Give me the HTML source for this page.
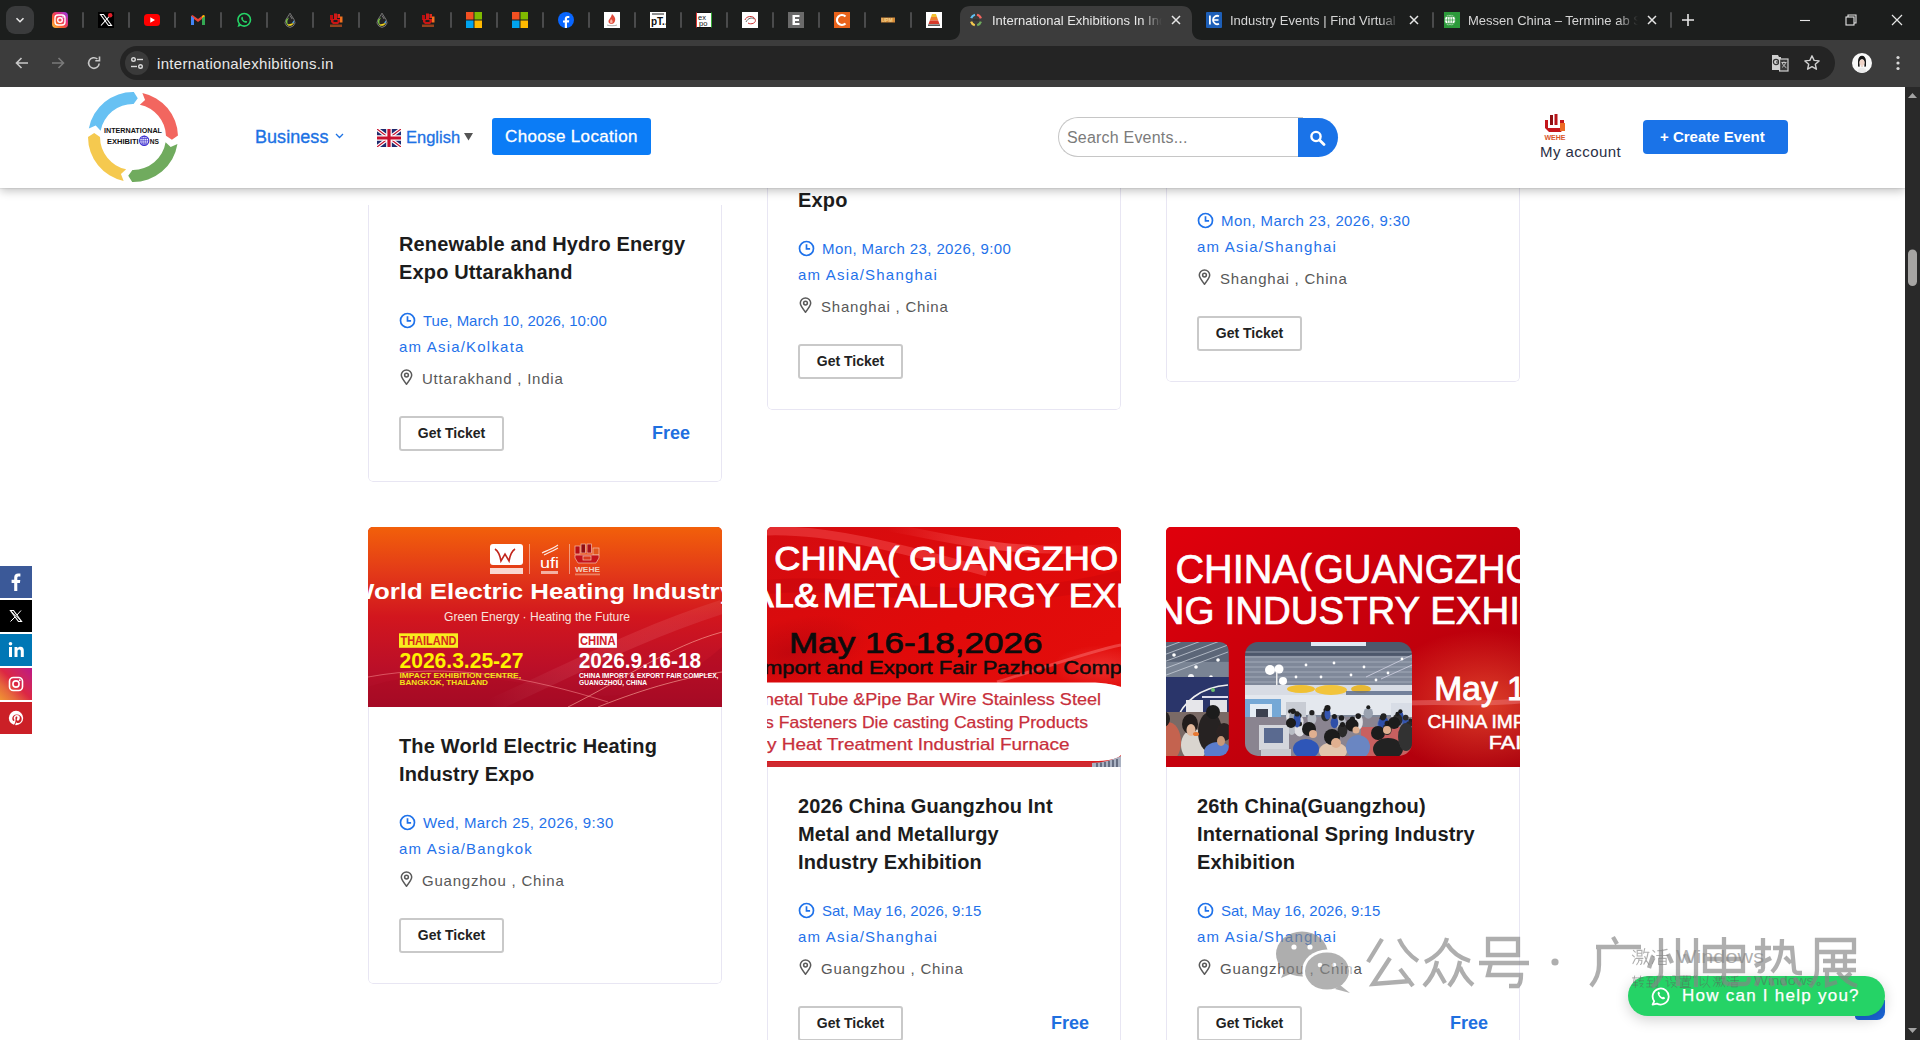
<!DOCTYPE html>
<html><head><meta charset="utf-8">
<style>
*{box-sizing:border-box;margin:0;padding:0}
html,body{width:1920px;height:1040px;overflow:hidden;background:#fff;font-family:"Liberation Sans",sans-serif}
.abs{position:absolute}
/* ---------- browser chrome ---------- */
#tabstrip{position:absolute;left:0;top:0;width:1920px;height:40px;background:#1c1e1d}
#toolbar{position:absolute;left:0;top:40px;width:1920px;height:47px;background:#3c3c3c}
.fav{position:absolute;top:12px;width:16px;height:16px}
.sep{position:absolute;top:12px;width:2px;height:16px;background:#4a4b4c;border-radius:1px}
#omni{position:absolute;left:120px;top:6px;width:1715px;height:34px;border-radius:17px;background:#242424}
/* ---------- page ---------- */
#page{position:absolute;left:0;top:87px;width:1905px;height:953px;background:#fff;overflow:hidden}
#scrollbar{position:absolute;left:1905px;top:87px;width:15px;height:953px;background:#292929;z-index:20}
#header{position:absolute;left:0;top:0;width:1905px;height:101px;background:#fff;z-index:10;box-shadow:0 1px 1px rgba(0,0,0,.06),0 3px 9px rgba(0,0,0,.24)}
.card{position:absolute;width:354px;border-radius:5px;background:#fff;overflow:hidden}
.cbody{padding:25px 31px 30px 30px;border:1px solid #e8e6f3;border-top:none;border-radius:0 0 5px 5px}
.ttl{font-weight:bold;font-size:20px;line-height:28px;color:#1c1c1c;letter-spacing:.15px}
.date{margin-top:22px;font-size:15px;line-height:26px;color:#1f72ea;position:relative}
.loc{margin-top:6px;font-size:15px;line-height:26px;color:#585858;position:relative;letter-spacing:.78px}
.row{margin-top:24px;height:35px;position:relative}
.btn{position:absolute;left:0;top:0;width:105px;height:35px;border:2px solid #c9c9c9;border-radius:3px;font-weight:bold;font-size:14px;line-height:31px;text-align:center;color:#222}
.free{position:absolute;right:0;top:0;font-weight:bold;font-size:18px;line-height:35px;color:#1f6fdf}
.img{position:relative;overflow:hidden;background:#d71920}
.ci{position:absolute;left:0;top:4px}
.pi{position:absolute;left:1px;top:3px}

</style></head>
<body>
<!-- TAB STRIP -->
<div id="tabstrip">
<div class="abs" style="left:6px;top:6px;width:28px;height:28px;border-radius:9px;background:#3a3b3c"></div>
<svg class="abs" style="left:14px;top:14px" width="12" height="12" viewBox="0 0 12 12"><path d="M2.5 4.2L6 7.7 9.5 4.2" stroke="#e6e6e6" stroke-width="1.6" fill="none"/></svg>
<svg class="fav" style="left:52px" viewBox="0 0 16 16"><defs><linearGradient id="ig" x1="0" y1="1" x2="1" y2="0"><stop offset="0" stop-color="#fdcb3c"/><stop offset=".35" stop-color="#f55a2f"/><stop offset=".65" stop-color="#e3307d"/><stop offset="1" stop-color="#8a3cf0"/></linearGradient></defs><rect width="16" height="16" rx="4" fill="url(#ig)"/><rect x="3" y="3" width="10" height="10" rx="3" fill="none" stroke="#fff" stroke-width="1.4"/><circle cx="8" cy="8" r="2.3" fill="none" stroke="#fff" stroke-width="1.4"/><circle cx="11" cy="5" r=".8" fill="#fff"/></svg>
<svg class="fav" style="left:98px" viewBox="0 0 16 16"><rect width="16" height="16" fill="#000"/><path d="M2.5 2.5h3l8 11h-3z" fill="none" stroke="#fff" stroke-width="1.1"/><path d="M13 2.5L3 13.5" stroke="#fff" stroke-width="1.1"/><circle cx="12.2" cy="3.2" r="2.2" fill="#e0202a"/></svg>
<svg class="fav" style="left:144px" viewBox="0 0 16 16"><rect y="2" width="16" height="12" rx="3.5" fill="#f00"/><path d="M6.3 5.2v5.6L11 8z" fill="#fff"/></svg>
<svg class="fav" style="left:190px" viewBox="0 0 16 16"><path d="M1 4v9h3V7l4 3 4-3v6h3V4l-1.5-1L8 7 2.5 3z" fill="#ea4335"/><path d="M1 4v9h3V6z" fill="#4285f4"/><path d="M15 4v9h-3V6z" fill="#34a853"/><path d="M12 6l3-2-1.5-1L12 4z" fill="#fbbc04"/></svg>
<svg class="fav" style="left:236px" viewBox="0 0 16 16"><circle cx="8.2" cy="7.8" r="6.3" fill="none" stroke="#25d366" stroke-width="1.6"/><path d="M1.5 15l1.2-3.6 2.4 2.4z" fill="#25d366"/><path d="M5.6 5.2c.4-.5.9-.4 1.1 0l.5 1.1-.5.7c.5 1 1.3 1.8 2.3 2.3l.7-.5 1.1.5c.4.2.5.7 0 1.1-1 .9-2.6.3-4-1.1S4.7 6.2 5.6 5.2z" fill="#25d366"/></svg>
<svg class="fav" style="left:282px" viewBox="0 0 16 16"><path d="M8 1.2L4 7.5A4.9 4.9 0 1 0 12 7.5z" fill="#232323" stroke="#9a9a9a" stroke-width=".7"/><path d="M4.2 7.6A4.9 4.9 0 0 0 8 14.3c-2-1-3-3-2.6-5.5L7 5.5z" fill="#79c043"/><path d="M5 12.5c1.5 1.5 4 2 6-.2.5-.6.8-1.2.9-1.9-1.5 1.2-4 1.5-6.9 2.1z" fill="#f0d21e"/><path d="M11.8 8.5c.5 1 .3 2.2-.2 3l-1.5-.8z" fill="#4ea2e6"/><path d="M8 3.5l2.2 3.5" stroke="#bbb" stroke-width=".6"/></svg>
<svg class="fav" style="left:328px" viewBox="0 0 16 16"><rect x="2" y="3" width="3" height="5" fill="#b80e10"/><rect x="6" y="1.5" width="3" height="6" fill="#d01818"/><rect x="9.5" y="2" width="2.5" height="4" fill="#e02a1a"/><path d="M3 7h9v3l-2 2H5L3 10z" fill="#cc1414"/><rect x="12" y="4.5" width="2.5" height="6" fill="#f0701e"/><rect x="5.5" y="8" width="4" height="2" fill="#1c1e1d"/><rect x="2" y="12.5" width="12" height="2.5" fill="#c8501e" opacity=".7"/></svg>
<svg class="fav" style="left:374px" viewBox="0 0 16 16"><path d="M8 1.2L4 7.5A4.9 4.9 0 1 0 12 7.5z" fill="#232323" stroke="#9a9a9a" stroke-width=".7"/><path d="M4.2 7.6A4.9 4.9 0 0 0 8 14.3c-2-1-3-3-2.6-5.5L7 5.5z" fill="#79c043"/><path d="M5 12.5c1.5 1.5 4 2 6-.2.5-.6.8-1.2.9-1.9-1.5 1.2-4 1.5-6.9 2.1z" fill="#f0d21e"/><path d="M11.8 8.5c.5 1 .3 2.2-.2 3l-1.5-.8z" fill="#4ea2e6"/><path d="M8 3.5l2.2 3.5" stroke="#bbb" stroke-width=".6"/></svg>
<svg class="fav" style="left:420px" viewBox="0 0 16 16"><rect x="2" y="3" width="3" height="5" fill="#b80e10"/><rect x="6" y="1.5" width="3" height="6" fill="#d01818"/><rect x="9.5" y="2" width="2.5" height="4" fill="#e02a1a"/><path d="M3 7h9v3l-2 2H5L3 10z" fill="#cc1414"/><rect x="12" y="4.5" width="2.5" height="6" fill="#f0701e"/><rect x="5.5" y="8" width="4" height="2" fill="#1c1e1d"/><rect x="2" y="12.5" width="12" height="2.5" fill="#c8501e" opacity=".7"/></svg>
<svg class="fav" style="left:466px" viewBox="0 0 16 16"><rect x="0" y="0" width="7.5" height="7.5" fill="#f25022"/><rect x="8.5" y="0" width="7.5" height="7.5" fill="#7fba00"/><rect x="0" y="8.5" width="7.5" height="7.5" fill="#00a4ef"/><rect x="8.5" y="8.5" width="7.5" height="7.5" fill="#ffb900"/></svg>
<svg class="fav" style="left:512px" viewBox="0 0 16 16"><rect x="0" y="0" width="7.5" height="7.5" fill="#f25022"/><rect x="8.5" y="0" width="7.5" height="7.5" fill="#7fba00"/><rect x="0" y="8.5" width="7.5" height="7.5" fill="#00a4ef"/><rect x="8.5" y="8.5" width="7.5" height="7.5" fill="#ffb900"/></svg>
<svg class="fav" style="left:558px" viewBox="0 0 16 16"><circle cx="8" cy="8" r="8" fill="#0866ff"/><path d="M9 16v-5.5h1.9l.3-2.2H9V7c0-.6.2-1.1 1.1-1.1h1.2V4c-.2 0-.9-.1-1.7-.1-1.7 0-2.8 1-2.8 2.9v1.6H5v2.2h1.8V16z" fill="#fff"/></svg>
<svg class="fav" style="left:604px" viewBox="0 0 16 16"><rect width="16" height="16" fill="#fff"/><path d="M8 2c2 2 4 4 3 7-.5 2-2 3-3.5 3S4 11 4.5 9C5 7 7 6 8 2z" fill="#e04a3a"/><path d="M7 7c1 1 2 2 1.5 3.5S6 11 6 10s.5-2 1-3z" fill="#f7b6a8"/><path d="M3 13c2 1 8 1 10 0" stroke="#999" stroke-width=".8" fill="none"/></svg>
<svg class="fav" style="left:650px" viewBox="0 0 16 16"><rect width="16" height="16" fill="#fff"/><text x="1" y="13" font-family="Liberation Sans" font-weight="bold" font-size="10" fill="#111">pT..</text><path d="M2 2h12" stroke="#222" stroke-width="1"/></svg>
<svg class="fav" style="left:696px" viewBox="0 0 16 16"><rect width="16" height="16" fill="#fff"/><rect x=".5" y=".5" width="15" height="15" fill="none" stroke="#111" stroke-width="1"/><path d="M.5 15.5v-15" stroke="#d33" stroke-width="1"/><path d="M15.5 .5v15" stroke="#3a3" stroke-width="1"/><text x="2" y="7.5" font-family="Liberation Sans" font-size="7.5" fill="#111">ex</text><text x="3" y="14" font-family="Liberation Sans" font-size="7.5" fill="#111">po</text></svg>
<svg class="fav" style="left:742px" viewBox="0 0 16 16"><rect width="16" height="16" fill="#fff"/><path d="M3 8c1-4 8-5 10-1s-4 6-7 4" stroke="#c33" stroke-width="1" fill="none"/><path d="M4 10c2-4 6-5 8-3" stroke="#444" stroke-width=".8" fill="none"/></svg>
<svg class="fav" style="left:788px" viewBox="0 0 16 16"><rect width="16" height="16" fill="#6a6a6a"/><path d="M4.5 3h7v2h-4.5v2h4v2h-4v2h4.5v2h-7z" fill="#fff"/></svg>
<svg class="fav" style="left:834px" viewBox="0 0 16 16"><rect width="16" height="16" fill="#e8621a"/><path d="M11.5 4.5A5 5 0 1 0 11.5 11.5" stroke="#fff" stroke-width="2.2" fill="none"/></svg>
<svg class="fav" style="left:880px" viewBox="0 0 16 16"><rect x="1" y="5.5" width="14" height="5" fill="#d38a3a"/><text x="1.5" y="10" font-family="Liberation Sans" font-weight="bold" font-size="5" fill="#f4d28c">UPM</text></svg>
<svg class="fav" style="left:926px" viewBox="0 0 16 16"><rect width="16" height="16" fill="#fff"/><path d="M6 2h4l1 3H5z" fill="#f2c230"/><path d="M5 5h6l1.2 3.5H3.8z" fill="#f08030"/><path d="M3.8 8.5h8.4l1.3 3.5H2.5z" fill="#d63a2a"/><rect x="2" y="12.5" width="12" height="1.3" fill="#333"/></svg>
<div class="sep" style="left:82px"></div><div class="sep" style="left:128px"></div><div class="sep" style="left:174px"></div><div class="sep" style="left:220px"></div><div class="sep" style="left:266px"></div><div class="sep" style="left:312px"></div><div class="sep" style="left:358px"></div><div class="sep" style="left:404px"></div><div class="sep" style="left:450px"></div><div class="sep" style="left:496px"></div><div class="sep" style="left:542px"></div><div class="sep" style="left:588px"></div><div class="sep" style="left:634px"></div><div class="sep" style="left:680px"></div><div class="sep" style="left:726px"></div><div class="sep" style="left:772px"></div><div class="sep" style="left:818px"></div><div class="sep" style="left:864px"></div><div class="sep" style="left:910px"></div>
<!-- active tab -->
<svg class="abs" style="left:950px;top:6px" width="252" height="34" viewBox="0 0 252 34"><path d="M0 34c6 0 10-4 10-10V10C10 4 14 0 20 0h212c6 0 10 4 10 10v14c0 6 4 10 10 10z" fill="#3c3c3c"/></svg>
<svg class="fav" style="left:968px" viewBox="0 0 16 16"><g fill="none" stroke-width="2.2"><path d="M3.2 6.2A5.3 5.3 0 0 1 7 2.8" stroke="#5fc0f3"/><path d="M9 2.8a5.3 5.3 0 0 1 3.9 3.6" stroke="#f2665f"/><path d="M12.9 9.6A5.3 5.3 0 0 1 9.2 13.2" stroke="#70ab5e"/><path d="M6.8 13.2A5.3 5.3 0 0 1 3.1 9.6" stroke="#f5c94f"/></g><rect x="5" y="7" width="6" height="2" fill="#333"/></svg>
<div class="abs" style="left:992px;top:13px;width:170px;height:18px;overflow:hidden;white-space:nowrap;font-size:13px;line-height:16px;color:#e8e8e8;-webkit-mask-image:linear-gradient(90deg,#000 150px,transparent 170px)">International Exhibitions In India 2025</div>
<svg class="abs" style="left:1171px;top:15px" width="10" height="10" viewBox="0 0 10 10"><path d="M1 1l8 8M9 1L1 9" stroke="#e6e6e6" stroke-width="1.5"/></svg>
<!-- tab 2 -->
<svg class="fav" style="left:1206px" viewBox="0 0 16 16"><rect width="16" height="16" rx="1" fill="#1d5fb8"/><rect x="3" y="3.5" width="1.8" height="9" fill="#fff"/><path d="M13 4.2A4.2 4.2 0 1 0 13 11.8" stroke="#fff" stroke-width="1.8" fill="none"/><rect x="7.5" y="7.2" width="5" height="1.6" fill="#fff"/></svg>
<div class="abs" style="left:1230px;top:13px;width:170px;height:18px;overflow:hidden;white-space:nowrap;font-size:13px;line-height:16px;color:#d5d5d5;-webkit-mask-image:linear-gradient(90deg,#000 150px,transparent 170px)">Industry Events | Find Virtual Events</div>
<svg class="abs" style="left:1409px;top:15px" width="10" height="10" viewBox="0 0 10 10"><path d="M1 1l8 8M9 1L1 9" stroke="#e6e6e6" stroke-width="1.5"/></svg>
<div class="sep" style="left:1432px"></div>
<!-- tab 3 -->
<svg class="fav" style="left:1444px" viewBox="0 0 16 16"><rect width="16" height="16" fill="#2c9a3a"/><circle cx="6" cy="8" r="5.5" fill="#fff"/><circle cx="6" cy="8" r="5.5" fill="none" stroke="#2c9a3a" stroke-width=".8"/><path d="M6 2.5v11M.5 8h11M2 4.5h8M2 11.5h8" stroke="#2c9a3a" stroke-width=".7"/><ellipse cx="6" cy="8" rx="2.5" ry="5.5" fill="none" stroke="#2c9a3a" stroke-width=".7"/></svg>
<div class="abs" style="left:1468px;top:13px;width:170px;height:18px;overflow:hidden;white-space:nowrap;font-size:13px;line-height:16px;color:#d5d5d5;-webkit-mask-image:linear-gradient(90deg,#000 150px,transparent 170px)">Messen China &ndash; Termine ab September</div>
<svg class="abs" style="left:1647px;top:15px" width="10" height="10" viewBox="0 0 10 10"><path d="M1 1l8 8M9 1L1 9" stroke="#e6e6e6" stroke-width="1.5"/></svg>
<div class="sep" style="left:1670px"></div>
<svg class="abs" style="left:1681px;top:13px" width="14" height="14" viewBox="0 0 14 14"><path d="M7 1v12M1 7h12" stroke="#e6e6e6" stroke-width="1.6"/></svg>
<!-- window controls -->
<svg class="abs" style="left:1799px;top:14px" width="12" height="12" viewBox="0 0 12 12"><path d="M1 6.5h10" stroke="#e6e6e6" stroke-width="1.1"/></svg>
<svg class="abs" style="left:1845px;top:14px" width="12" height="12" viewBox="0 0 12 12"><rect x="1" y="3" width="8" height="8" fill="none" stroke="#e6e6e6" stroke-width="1.1"/><path d="M3 3V1h8v8H9" fill="none" stroke="#e6e6e6" stroke-width="1.1"/></svg>
<svg class="abs" style="left:1891px;top:14px" width="12" height="12" viewBox="0 0 12 12"><path d="M1 1l10 10M11 1L1 11" stroke="#e6e6e6" stroke-width="1.2"/></svg>
</div>
<div id="toolbar">
<svg class="abs" style="left:14px;top:15px" width="16" height="16" viewBox="0 0 16 16"><path d="M14 8H2.5M7.5 3L2.5 8l5 5" stroke="#c8c8c8" stroke-width="1.6" fill="none"/></svg>
<svg class="abs" style="left:50px;top:15px" width="16" height="16" viewBox="0 0 16 16"><path d="M2 8h11.5M8.5 3l5 5-5 5" stroke="#7a7a7a" stroke-width="1.6" fill="none"/></svg>
<svg class="abs" style="left:86px;top:15px" width="16" height="16" viewBox="0 0 16 16"><path d="M13.2 8.5A5.3 5.3 0 1 1 11.4 4" stroke="#c8c8c8" stroke-width="1.6" fill="none"/><path d="M13.5 1.5v4.2H9.3" stroke="#c8c8c8" stroke-width="1.6" fill="none"/></svg>
<div id="omni"></div>
<div class="abs" style="left:125px;top:11px;width:24px;height:24px;border-radius:12px;background:#3a3a3a"></div>
<svg class="abs" style="left:129px;top:15px" width="16" height="16" viewBox="0 0 16 16"><g stroke="#d8d8d8" stroke-width="1.4" fill="none"><circle cx="4.5" cy="4.5" r="1.8"/><path d="M8 4.5h6"/><circle cx="11.5" cy="11.5" r="1.8"/><path d="M2 11.5h6"/></g></svg>
<div class="abs" style="left:157px;top:14px;font-size:15px;line-height:20px;color:#e8e8e8;letter-spacing:.3px">internationalexhibitions.in</div>
<svg class="abs" style="left:1771px;top:14px" width="18" height="18" viewBox="0 0 18 18"><path d="M1 1h6l1 2h2v13H1z" fill="#cfcfcf"/><circle cx="5" cy="8" r="2.6" fill="none" stroke="#333" stroke-width="1.2"/><path d="M5 8h2.5" stroke="#333" stroke-width="1.1"/><rect x="8.6" y="5" width="8.4" height="12" fill="#3a3a3a" stroke="#cfcfcf" stroke-width="1.2"/><path d="M10.5 8.5h5M13 7.5v1M11.2 8.5c.6 2.2 2 4 4.2 5.2M14.6 8.5c-.5 2-1.6 3.6-3.4 4.8" stroke="#cfcfcf" stroke-width=".9" fill="none"/></svg>
<svg class="abs" style="left:1803px;top:14px" width="18" height="18" viewBox="0 0 18 18"><path d="M9 1.8l2.1 4.6 5 .5-3.8 3.4 1.1 4.9L9 12.7l-4.4 2.5 1.1-4.9L1.9 6.9l5-.5z" fill="none" stroke="#d0d0d0" stroke-width="1.4" stroke-linejoin="round"/></svg>
<div class="abs" style="left:1852px;top:13px;width:20px;height:20px;border-radius:50%;background:#f8f8f8;overflow:hidden"><svg width="20" height="20" viewBox="0 0 20 20"><path d="M6 13.5V8.3C6 4.8 7.8 2.8 10 2.8s4 2 4 5.5v5.2l-1.6.3V9.2c0-1.8-1-3-2.4-3s-2.4 1.2-2.4 3v4.6z" fill="#161616"/><ellipse cx="10" cy="9.6" rx="2.5" ry="3.1" fill="#f0d4c8"/><path d="M9.3 12.5v1.5h1.4v-1.5z" fill="#e8c8b8"/><path d="M4.5 21c.6-3.8 2.8-6.5 5.5-6.5s4.9 2.7 5.5 6.5z" fill="#eaeaea"/></svg></div>
<svg class="abs" style="left:1892px;top:14px" width="12" height="18" viewBox="0 0 12 18"><circle cx="6" cy="3.5" r="1.6" fill="#d8d8d8"/><circle cx="6" cy="9" r="1.6" fill="#d8d8d8"/><circle cx="6" cy="14.5" r="1.6" fill="#d8d8d8"/></svg>
</div>
<div id="page">
  <div class="card" style="left:368px;top:-62px"><div class="img" style="height:180px;background:#fff"></div><div class="cbody">
    <div class="ttl">Renewable and Hydro Energy<br>Expo Uttarakhand</div>
    <div class="date"><svg class="ci" width="17" height="17" viewBox="0 0 17 17"><circle cx="8.5" cy="8.5" r="7" fill="none" stroke="#1f72ea" stroke-width="1.7"/><path d="M8.5 4.3v4.6h3.6" fill="none" stroke="#1f72ea" stroke-width="1.7"/></svg><span style="margin-left:24px;letter-spacing:0.0px">Tue, March 10, 2026, 10:00</span><br><span style="letter-spacing:1.2px">am Asia/Kolkata</span></div>
    <div class="loc"><svg class="pi" width="13" height="17" viewBox="0 0 13 17"><path d="M6.5 15.2C3.6 11.6 1.3 8.8 1.3 6.1a5.2 5.2 0 0 1 10.4 0c0 2.7-2.3 5.5-5.2 9.1z" fill="none" stroke="#5a5a5a" stroke-width="1.5" stroke-linejoin="round"/><circle cx="6.5" cy="6.1" r="1.9" fill="none" stroke="#5a5a5a" stroke-width="1.5"/></svg><span style="margin-left:23px">Uttarakhand , India</span></div>
    <div class="row"><div class="btn">Get Ticket</div><div class="free">Free</div></div>
  </div></div>
  <div class="card" style="left:767px;top:-134px"><div class="img" style="height:180px"></div><div class="cbody">
    <div class="ttl">Shanghai International<br>Expo</div>
    <div class="date"><svg class="ci" width="17" height="17" viewBox="0 0 17 17"><circle cx="8.5" cy="8.5" r="7" fill="none" stroke="#1f72ea" stroke-width="1.7"/><path d="M8.5 4.3v4.6h3.6" fill="none" stroke="#1f72ea" stroke-width="1.7"/></svg><span style="margin-left:24px;letter-spacing:0.4px">Mon, March 23, 2026, 9:00</span><br><span style="letter-spacing:1.2px">am Asia/Shanghai</span></div>
    <div class="loc"><svg class="pi" width="13" height="17" viewBox="0 0 13 17"><path d="M6.5 15.2C3.6 11.6 1.3 8.8 1.3 6.1a5.2 5.2 0 0 1 10.4 0c0 2.7-2.3 5.5-5.2 9.1z" fill="none" stroke="#5a5a5a" stroke-width="1.5" stroke-linejoin="round"/><circle cx="6.5" cy="6.1" r="1.9" fill="none" stroke="#5a5a5a" stroke-width="1.5"/></svg><span style="margin-left:23px">Shanghai , China</span></div>
    <div class="row"><div class="btn">Get Ticket</div></div>
  </div></div>
  <div class="card" style="left:1166px;top:-162px"><div class="img" style="height:180px"></div><div class="cbody">
    <div class="ttl">Shanghai International<br>Heating Expo</div>
    <div class="date"><svg class="ci" width="17" height="17" viewBox="0 0 17 17"><circle cx="8.5" cy="8.5" r="7" fill="none" stroke="#1f72ea" stroke-width="1.7"/><path d="M8.5 4.3v4.6h3.6" fill="none" stroke="#1f72ea" stroke-width="1.7"/></svg><span style="margin-left:24px;letter-spacing:0.4px">Mon, March 23, 2026, 9:30</span><br><span style="letter-spacing:1.2px">am Asia/Shanghai</span></div>
    <div class="loc"><svg class="pi" width="13" height="17" viewBox="0 0 13 17"><path d="M6.5 15.2C3.6 11.6 1.3 8.8 1.3 6.1a5.2 5.2 0 0 1 10.4 0c0 2.7-2.3 5.5-5.2 9.1z" fill="none" stroke="#5a5a5a" stroke-width="1.5" stroke-linejoin="round"/><circle cx="6.5" cy="6.1" r="1.9" fill="none" stroke="#5a5a5a" stroke-width="1.5"/></svg><span style="margin-left:23px">Shanghai , China</span></div>
    <div class="row"><div class="btn">Get Ticket</div></div>
  </div></div>
  <div class="card" style="left:368px;top:440px"><div class="img" style="height:180px"><svg width="354" height="180" viewBox="0 0 354 180" style="display:block">
<defs>
<linearGradient id="b1g" x1="0" y1="0" x2="0" y2="1"><stop offset="0" stop-color="#f2600a"/><stop offset=".25" stop-color="#e33a18"/><stop offset=".5" stop-color="#d2161e"/><stop offset=".78" stop-color="#bb0f28"/><stop offset="1" stop-color="#a30c28"/></linearGradient>
<linearGradient id="b1w" x1="0" y1="0" x2="1" y2="0"><stop offset="0" stop-color="#fff" stop-opacity="0"/><stop offset=".6" stop-color="#ff8a8a" stop-opacity=".35"/><stop offset="1" stop-color="#fff" stop-opacity=".15"/></linearGradient>
</defs>
<rect width="354" height="180" fill="url(#b1g)"/>
<path d="M0 160C60 140 130 150 200 165S320 150 354 120V180H0z" fill="#a80a20" opacity=".35"/>
<path d="M120 180C190 150 260 110 354 80" stroke="url(#b1w)" stroke-width="14" fill="none" opacity=".45"/>
<path d="M0 150C80 135 160 150 240 175" stroke="#ff9a9a" stroke-width="1" fill="none" opacity=".5"/>
<path d="M200 180C260 150 300 120 354 105" stroke="#ffb0a0" stroke-width="1" fill="none" opacity=".6"/>
<path d="M230 180C280 160 320 150 354 145" stroke="#ffb0a0" stroke-width="1" fill="none" opacity=".6"/>
<!-- logos -->
<rect x="122" y="17" width="33" height="21" rx="3" fill="#fff"/>
<path d="M127 22c3 2 5 6 6 12l4-7 4 7c1-6 3-10 6-12" stroke="#c2261c" stroke-width="1.6" fill="none"/>
<rect x="122" y="41" width="33" height="6" fill="#fff" opacity=".8"/>
<rect x="161" y="17" width="1" height="30" fill="#fff" opacity=".45"/>
<path d="M174 26c4-2 10-4 16-8M176 28c4-2 9-4 14-7" stroke="#fff" stroke-width="1.1" fill="none" opacity=".9"/>
<text x="172" y="41" font-family="Liberation Sans" font-size="14" fill="#fff" textLength="19" lengthAdjust="spacingAndGlyphs">ufi</text>
<rect x="173" y="44" width="17" height="3" fill="#fff" opacity=".6"/>
<rect x="201" y="17" width="1" height="30" fill="#fff" opacity=".45"/>
<g stroke="#f3c0b0" stroke-width=".7"><rect x="207" y="19" width="5" height="8" fill="#b80e14"/><rect x="213" y="17" width="4.5" height="9" fill="#8e0c10"/><rect x="219" y="17" width="4.5" height="9" fill="#a8101a"/><rect x="225" y="21" width="6" height="7" fill="#e0581e"/><path d="M207 28h24v3l-3 5h-18l-3-5z" fill="#c4141c"/><rect x="215" y="29" width="8" height="4" fill="#d9391c"/></g>
<text x="207" y="45" font-family="Liberation Sans" font-weight="bold" font-size="8" fill="#f1d0c0" textLength="25" lengthAdjust="spacingAndGlyphs">WEHE</text>
<rect x="207" y="46.5" width="25" height="1.8" fill="#f1a080" opacity=".7"/>
<!-- title -->
<text x="-18" y="72" font-family="Liberation Sans" font-weight="bold" font-size="21.5" fill="#fff" textLength="384" lengthAdjust="spacingAndGlyphs">World Electric Heating Industry</text>
<text x="76" y="93.6" font-family="Liberation Sans" font-size="12" fill="#f7e4dc" textLength="186" lengthAdjust="spacingAndGlyphs">Green Energy · Heating the Future</text>
<rect x="31" y="106.3" width="59" height="14.5" fill="#f9ec1e"/>
<text x="32.5" y="118.4" font-family="Liberation Sans" font-weight="bold" font-size="12" fill="#d22a1e" textLength="56" lengthAdjust="spacingAndGlyphs">THAILAND</text>
<text x="31.5" y="141.4" font-family="Liberation Sans" font-weight="bold" font-size="22.5" fill="#fff200" textLength="124" lengthAdjust="spacingAndGlyphs">2026.3.25-27</text>
<text x="31.5" y="151" font-family="Liberation Sans" font-weight="bold" font-size="7.6" fill="#f2e21a" textLength="121.5" lengthAdjust="spacingAndGlyphs">IMPACT EXHIBITION CENTRE,</text>
<text x="31.5" y="158.3" font-family="Liberation Sans" font-weight="bold" font-size="7.6" fill="#f2e21a" textLength="88.5" lengthAdjust="spacingAndGlyphs">BANGKOK, THAILAND</text>
<rect x="210.7" y="106.3" width="38.2" height="14.5" fill="#fff"/>
<text x="212" y="118.4" font-family="Liberation Sans" font-weight="bold" font-size="12" fill="#d0202a" textLength="35.5" lengthAdjust="spacingAndGlyphs">CHINA</text>
<text x="210.7" y="141.4" font-family="Liberation Sans" font-weight="bold" font-size="22.5" fill="#fff" textLength="122.3" lengthAdjust="spacingAndGlyphs">2026.9.16-18</text>
<text x="211" y="151" font-family="Liberation Sans" font-weight="bold" font-size="7.6" fill="#fff" textLength="139.5" lengthAdjust="spacingAndGlyphs">CHINA IMPORT &amp; EXPORT FAIR COMPLEX,</text>
<text x="211" y="158.3" font-family="Liberation Sans" font-weight="bold" font-size="7.6" fill="#fff" textLength="68" lengthAdjust="spacingAndGlyphs">GUANGZHOU, CHINA</text>
</svg></div><div class="cbody">
    <div class="ttl">The World Electric Heating<br>Industry Expo</div>
    <div class="date"><svg class="ci" width="17" height="17" viewBox="0 0 17 17"><circle cx="8.5" cy="8.5" r="7" fill="none" stroke="#1f72ea" stroke-width="1.7"/><path d="M8.5 4.3v4.6h3.6" fill="none" stroke="#1f72ea" stroke-width="1.7"/></svg><span style="margin-left:24px;letter-spacing:0.4px">Wed, March 25, 2026, 9:30</span><br><span style="letter-spacing:1.2px">am Asia/Bangkok</span></div>
    <div class="loc"><svg class="pi" width="13" height="17" viewBox="0 0 13 17"><path d="M6.5 15.2C3.6 11.6 1.3 8.8 1.3 6.1a5.2 5.2 0 0 1 10.4 0c0 2.7-2.3 5.5-5.2 9.1z" fill="none" stroke="#5a5a5a" stroke-width="1.5" stroke-linejoin="round"/><circle cx="6.5" cy="6.1" r="1.9" fill="none" stroke="#5a5a5a" stroke-width="1.5"/></svg><span style="margin-left:23px">Guangzhou , China</span></div>
    <div class="row"><div class="btn">Get Ticket</div></div>
  </div></div>
  <div class="card" style="left:767px;top:440px"><div class="img" style="height:240px"><svg width="354" height="240" viewBox="0 0 354 240" style="display:block">
<defs>
<linearGradient id="b2g" x1="0" y1="0" x2="1" y2="1"><stop offset="0" stop-color="#d40c10"/><stop offset=".45" stop-color="#e00a0a"/><stop offset="1" stop-color="#e4100c"/></linearGradient>
<radialGradient id="b2d"><stop offset="0" stop-color="#9a0010" stop-opacity=".4"/><stop offset="1" stop-color="#9a0010" stop-opacity="0"/></radialGradient><radialGradient id="b2l"><stop offset="0" stop-color="#ff7070" stop-opacity=".35"/><stop offset="1" stop-color="#ff7070" stop-opacity="0"/></radialGradient><linearGradient id="b2s" x1="0" y1="0" x2="1" y2="0"><stop offset="0" stop-color="#ff6a6a" stop-opacity="0"/><stop offset=".5" stop-color="#ff7070" stop-opacity=".5"/><stop offset="1" stop-color="#ff5050" stop-opacity="0"/></linearGradient>
</defs>
<rect width="354" height="240" fill="url(#b2g)"/>
<path d="M0 4C60 2 130 20 220 45" stroke="#ff6a6a" stroke-width="9" fill="none" opacity=".35"/>
<path d="M120 0C180 10 240 30 354 20" stroke="url(#b2s)" stroke-width="8" fill="none"/>
<ellipse cx="25" cy="125" rx="80" ry="34" transform="rotate(-12 25 125)" fill="url(#b2d)"/>
<path d="M0 60C100 50 200 90 354 50" stroke="#b00008" stroke-width="14" fill="none" opacity=".2"/>
<ellipse cx="335" cy="140" rx="50" ry="22" fill="url(#b2l)"/>
<path d="M230 155C280 140 320 125 354 118" stroke="#ff8a8a" stroke-width="3" fill="none" opacity=".4"/>
<text x="7.3" y="42.6" font-family="Liberation Sans" font-size="33" fill="#fff" stroke="#fff" stroke-width=".9" textLength="343.8" lengthAdjust="spacingAndGlyphs">CHINA( GUANGZHO</text>
<text x="-17.4" y="79.6" font-family="Liberation Sans" font-size="33" fill="#fff" stroke="#fff" stroke-width=".9" textLength="68.6" lengthAdjust="spacingAndGlyphs">AL&amp;</text><text x="55.8" y="79.6" font-family="Liberation Sans" font-size="33" fill="#fff" stroke="#fff" stroke-width=".9" textLength="352" lengthAdjust="spacingAndGlyphs">METALLURGY EXHIB</text>
<text x="21.9" y="125.8" font-family="Liberation Sans" font-size="29.5" fill="#0c0c0c" stroke="#0c0c0c" stroke-width=".7" textLength="253.6" lengthAdjust="spacingAndGlyphs">May 16-18,2026</text>
<text x="-3" y="146.9" font-family="Liberation Sans" font-size="18" fill="#0c0c0c" stroke="#0c0c0c" stroke-width=".45" textLength="358" lengthAdjust="spacingAndGlyphs">mport and Export Fair Pazhou Comp</text>
<path d="M0 155.6H325C342 155.6 354 160 354 160V228C350 232 342 234 325 234H0z" fill="#fff"/>
<path d="M0 234.5H354V240H0z" fill="#cf2a30"/>
<path d="M325 240V236C335 236 345 233 354 229V240z" fill="#aab2c2"/><path d="M330 240v-4M334 240v-4.5M338 240v-5M342 240v-6M346 240v-7M350 240v-8" stroke="#3a4258" stroke-width="1.2"/>
<text x="-3" y="178" font-family="Liberation Sans" font-size="16.5" fill="#c82f3b" stroke="#c82f3b" stroke-width=".25" textLength="337" lengthAdjust="spacingAndGlyphs">netal  Tube &amp;Pipe  Bar Wire Stainless Steel</text>
<text x="-2" y="200.5" font-family="Liberation Sans" font-size="16.5" fill="#c82f3b" stroke="#c82f3b" stroke-width=".25" textLength="323" lengthAdjust="spacingAndGlyphs">s Fasteners Die casting Casting Products</text>
<text x="0" y="222.5" font-family="Liberation Sans" font-size="16.5" fill="#c82f3b" stroke="#c82f3b" stroke-width=".25" textLength="302.5" lengthAdjust="spacingAndGlyphs">y Heat  Treatment  Industrial Furnace</text>
</svg></div><div class="cbody">
    <div class="ttl">2026 China Guangzhou Int<br>Metal and Metallurgy<br>Industry Exhibition</div>
    <div class="date"><svg class="ci" width="17" height="17" viewBox="0 0 17 17"><circle cx="8.5" cy="8.5" r="7" fill="none" stroke="#1f72ea" stroke-width="1.7"/><path d="M8.5 4.3v4.6h3.6" fill="none" stroke="#1f72ea" stroke-width="1.7"/></svg><span style="margin-left:24px;letter-spacing:0.0px">Sat, May 16, 2026, 9:15</span><br><span style="letter-spacing:1.2px">am Asia/Shanghai</span></div>
    <div class="loc"><svg class="pi" width="13" height="17" viewBox="0 0 13 17"><path d="M6.5 15.2C3.6 11.6 1.3 8.8 1.3 6.1a5.2 5.2 0 0 1 10.4 0c0 2.7-2.3 5.5-5.2 9.1z" fill="none" stroke="#5a5a5a" stroke-width="1.5" stroke-linejoin="round"/><circle cx="6.5" cy="6.1" r="1.9" fill="none" stroke="#5a5a5a" stroke-width="1.5"/></svg><span style="margin-left:23px">Guangzhou , China</span></div>
    <div class="row"><div class="btn">Get Ticket</div><div class="free">Free</div></div>
  </div></div>
  <div class="card" style="left:1166px;top:440px"><div class="img" style="height:240px"><svg width="354" height="240" viewBox="0 0 354 240" style="display:block">
<defs>
<linearGradient id="b3g" x1="0" y1="0" x2="1" y2="1"><stop offset="0" stop-color="#e0000c"/><stop offset=".5" stop-color="#c6000c"/><stop offset="1" stop-color="#a9000d"/></linearGradient>
<radialGradient id="b3r" cx=".9" cy=".73" r=".3"><stop offset="0" stop-color="#ff7040" stop-opacity=".55"/><stop offset="1" stop-color="#ff7040" stop-opacity="0"/></radialGradient>
<linearGradient id="ceil" x1="0" y1="0" x2="0" y2="1"><stop offset="0" stop-color="#5d6780"/><stop offset=".6" stop-color="#8a93a6"/><stop offset="1" stop-color="#c9ced8"/></linearGradient>
<clipPath id="cp1"><rect x="-20" y="114.9" width="82.8" height="114" rx="9"/></clipPath>
<filter id="blr" x="-5%" y="-5%" width="110%" height="110%"><feGaussianBlur stdDeviation=".5"/></filter><clipPath id="cp2"><rect x="79" y="114.9" width="167" height="114" rx="13"/></clipPath>
</defs>
<rect width="354" height="240" fill="url(#b3g)"/>
<rect width="354" height="240" fill="url(#b3r)"/>
<path d="M240 176C280 174 320 178 354 174" stroke="#f08080" stroke-width="5" fill="none" opacity=".45"/>
<text x="9.5" y="55.6" font-family="Liberation Sans" font-size="40" fill="#fff" stroke="#fff" stroke-width=".7" textLength="136.5" lengthAdjust="spacingAndGlyphs">CHINA(</text><text x="148" y="55.6" font-family="Liberation Sans" font-size="40" fill="#fff" stroke="#fff" stroke-width=".7" textLength="249" lengthAdjust="spacingAndGlyphs">GUANGZHOU</text>
<text x="-9.5" y="96.9" font-family="Liberation Sans" font-size="39" fill="#fff" stroke="#fff" stroke-width=".7" textLength="58" lengthAdjust="spacingAndGlyphs">NG</text><text x="58.5" y="96.9" font-family="Liberation Sans" font-size="39" fill="#fff" stroke="#fff" stroke-width=".7" textLength="321" lengthAdjust="spacingAndGlyphs">INDUSTRY EXHIB</text>
<g clip-path="url(#cp1)" filter="url(#blr)">
<rect x="-20" y="114.9" width="83" height="114" fill="#7a8494"/>
<rect x="-20" y="114.9" width="83" height="20" fill="#5c6678"/>
<path d="M-5 150L62 125" stroke="#d0d6e0" stroke-width=".9" opacity=".8"/>
<path d="M-5 143L62 118" stroke="#d0d6e0" stroke-width=".9" opacity=".8"/>
<path d="M-5 136L62 111" stroke="#d0d6e0" stroke-width=".9" opacity=".8"/>
<path d="M-5 129L62 104" stroke="#d0d6e0" stroke-width=".9" opacity=".8"/>
<path d="M-5 122L62 97" stroke="#d0d6e0" stroke-width=".9" opacity=".8"/>
<path d="M-5 115L62 90" stroke="#d0d6e0" stroke-width=".9" opacity=".8"/>
<circle cx="8" cy="128" r="1.8" fill="#fff"/>
<circle cx="30" cy="140" r="1.8" fill="#fff"/>
<circle cx="52" cy="133" r="1.8" fill="#fff"/>
<circle cx="20" cy="152" r="1.8" fill="#fff"/>
<circle cx="45" cy="150" r="1.8" fill="#fff"/>
<circle cx="25" cy="150" r="3" fill="#fff" opacity=".9"/>
<rect x="-20" y="150" width="83" height="40" fill="#2a356a"/>
<path d="M10 195C16 175 35 160 62 158" stroke="#f0f0f0" stroke-width="1.6" fill="none"/>
<circle cx="47" cy="163" r="2" fill="#6cc070"/><rect x="36" y="169" width="26" height="2" fill="#dde"/>
<rect x="-20" y="155" width="8" height="20" fill="#e8e8f0" opacity=".6"/>
<rect x="20" y="173" width="17" height="15" fill="#e6e6ea"/><rect x="44" y="173" width="17" height="15" fill="#e2e2e6"/>
<rect x="-20" y="185" width="83" height="44" fill="#7a6a66"/>
<ellipse cx="2" cy="215" rx="13" ry="20" fill="#c46450"/>
<ellipse cx="28" cy="218" rx="13" ry="16" fill="#d9d5cf"/>
<ellipse cx="44" cy="205" rx="12" ry="20" fill="#262424"/>
<ellipse cx="52" cy="225" rx="14" ry="10" fill="#5a7ccc"/>
<ellipse cx="-3" cy="192" rx="7" ry="8" fill="#262220"/><ellipse cx="24" cy="197" rx="8" ry="10" fill="#221c1a"/><ellipse cx="47" cy="185" rx="7" ry="7" fill="#1e1c1c"/><ellipse cx="58" cy="205" rx="8" ry="9" fill="#2a2220"/>
<ellipse cx="25" cy="203" rx="4.5" ry="6" fill="#e4b89c"/><ellipse cx="55" cy="214" rx="4" ry="5" fill="#c89878"/><ellipse cx="30" cy="207" rx="3" ry="2" fill="#e87830"/>
</g>
<g clip-path="url(#cp2)" filter="url(#blr)">
<rect x="79" y="114.9" width="167" height="114" fill="#7f8899"/>
<rect x="79" y="114.9" width="167" height="14" fill="#4e586c"/>
<rect x="145" y="115" width="55" height="4" fill="#dfe8f4"/>
<path d="M79 125H246" stroke="#c0c8d4" stroke-width=".8" opacity=".7"/>
<path d="M79 130H246" stroke="#c0c8d4" stroke-width=".8" opacity=".7"/>
<path d="M79 135H246" stroke="#c0c8d4" stroke-width=".8" opacity=".7"/>
<path d="M79 140H246" stroke="#c0c8d4" stroke-width=".8" opacity=".7"/>
<path d="M79 145H246" stroke="#c0c8d4" stroke-width=".8" opacity=".7"/>
<path d="M79 150H246" stroke="#c0c8d4" stroke-width=".8" opacity=".7"/>
<path d="M79 155H246" stroke="#c0c8d4" stroke-width=".8" opacity=".7"/>
<path d="M200 150L246 128M215 152L246 138" stroke="#dde" stroke-width="1" opacity=".7"/>
<circle cx="140" cy="138" r="1.4" fill="#fff"/>
<circle cx="168" cy="136" r="1.4" fill="#fff"/>
<circle cx="198" cy="140" r="1.4" fill="#fff"/>
<circle cx="222" cy="146" r="1.4" fill="#fff"/>
<circle cx="155" cy="150" r="1.4" fill="#fff"/>
<circle cx="185" cy="148" r="1.4" fill="#fff"/>
<circle cx="210" cy="153" r="1.4" fill="#fff"/>
<circle cx="236" cy="132" r="1.4" fill="#fff"/>
<circle cx="130" cy="150" r="1.4" fill="#fff"/>
<circle cx="104" cy="143" r="5" fill="#fff"/><circle cx="113" cy="142" r="4.5" fill="#fff"/><circle cx="117" cy="154" r="4" fill="#fff"/><rect x="110" y="145" width="1.5" height="30" fill="#eee"/>
<rect x="79" y="158" width="167" height="12" fill="#d8dce4"/>
<ellipse cx="135" cy="162" rx="14" ry="4" fill="#f0c030"/><ellipse cx="165" cy="163" rx="16" ry="5" fill="#f2c43a"/><ellipse cx="195" cy="162" rx="10" ry="4" fill="#e8b830"/>
<rect x="180" y="164" width="66" height="8" fill="#5a6a88" opacity=".8"/>
<rect x="79" y="168" width="167" height="20" fill="#e4e8ee"/>
<rect x="79" y="172" width="36" height="34" fill="#74a8d6"/><rect x="84" y="177" width="22" height="24" fill="#e4ecf4"/><rect x="90" y="182" width="12" height="14" fill="#3a4050"/>
<rect x="120" y="175" width="20" height="25" fill="#c8ccd4"/><rect x="225" y="176" width="21" height="20" fill="#d8dde6"/>
<rect x="79" y="190" width="167" height="39" fill="#8a8490"/>
<rect x="195" y="200" width="51" height="29" fill="#c86060"/>
<ellipse cx="159.5" cy="189.0" rx="4.3" ry="5.2" fill="#2a2a2a"/>
<circle cx="159.5" cy="183.0" r="2.1" fill="#1c1c1c"/>
<ellipse cx="234.4" cy="190.3" rx="3.2" ry="6.3" fill="#2f4fa8"/>
<circle cx="234.4" cy="184.3" r="2.1" fill="#1a1a1a"/>
<ellipse cx="125.6" cy="197.3" rx="4.9" ry="6.9" fill="#2a2a2a"/>
<circle cx="125.6" cy="191.3" r="3.1" fill="#1a1a1a"/>
<ellipse cx="124.3" cy="190.4" rx="4.1" ry="5.4" fill="#e0e0e4"/>
<circle cx="124.3" cy="184.4" r="2.2" fill="#1c1c1c"/>
<ellipse cx="191.1" cy="197.2" rx="4.4" ry="5.3" fill="#2a2a2a"/>
<circle cx="191.1" cy="191.2" r="2.8" fill="#2a2a2a"/>
<ellipse cx="130.5" cy="200.2" rx="4.1" ry="6.9" fill="#e0e0e4"/>
<circle cx="130.5" cy="194.2" r="2.8" fill="#1a1a1a"/>
<ellipse cx="217.5" cy="195.3" rx="4.8" ry="6.1" fill="#2f4fa8"/>
<circle cx="217.5" cy="189.3" r="3.0" fill="#222"/>
<ellipse cx="128.5" cy="192.0" rx="4.0" ry="6.0" fill="#e0e0e4"/>
<circle cx="128.5" cy="186.0" r="2.3" fill="#1c1c1c"/>
<ellipse cx="133.1" cy="194.4" rx="4.5" ry="5.5" fill="#e0e0e4"/>
<circle cx="133.1" cy="188.4" r="2.5" fill="#1c1c1c"/>
<ellipse cx="215.9" cy="197.5" rx="4.8" ry="5.9" fill="#6a7cae"/>
<circle cx="215.9" cy="191.5" r="2.4" fill="#1a1a1a"/>
<ellipse cx="192.2" cy="195.1" rx="4.7" ry="7.8" fill="#e0e0e4"/>
<circle cx="192.2" cy="189.1" r="2.8" fill="#1c1c1c"/>
<ellipse cx="125.8" cy="200.0" rx="4.3" ry="8.0" fill="#b8bcc4"/>
<circle cx="125.8" cy="194.0" r="2.5" fill="#1a1a1a"/>
<ellipse cx="231.5" cy="192.9" rx="4.9" ry="6.1" fill="#2a2a2a"/>
<circle cx="231.5" cy="186.9" r="2.1" fill="#1c1c1c"/>
<ellipse cx="145.9" cy="191.7" rx="4.5" ry="6.2" fill="#b8bcc4"/>
<circle cx="145.9" cy="185.7" r="2.6" fill="#222"/>
<ellipse cx="175.5" cy="197.0" rx="4.8" ry="7.5" fill="#b8bcc4"/>
<circle cx="175.5" cy="191.0" r="2.7" fill="#1a1a1a"/>
<ellipse cx="244.3" cy="199.7" rx="3.8" ry="5.7" fill="#3456b0"/>
<circle cx="244.3" cy="193.7" r="2.2" fill="#222"/>
<ellipse cx="202.3" cy="186.2" rx="4.7" ry="5.5" fill="#9aa2b0"/>
<circle cx="202.3" cy="180.2" r="2.0" fill="#1a1a1a"/>
<ellipse cx="186.4" cy="198.2" rx="3.6" ry="5.4" fill="#b8bcc4"/>
<circle cx="186.4" cy="192.2" r="2.6" fill="#1c1c1c"/>
<ellipse cx="176.5" cy="203.4" rx="4.9" ry="7.0" fill="#2a2a2a"/>
<circle cx="176.5" cy="197.4" r="2.5" fill="#1a1a1a"/>
<ellipse cx="168.4" cy="195.6" rx="3.8" ry="5.6" fill="#2f4fa8"/>
<circle cx="168.4" cy="189.6" r="2.5" fill="#1c1c1c"/>
<ellipse cx="161.5" cy="187.1" rx="3.0" ry="5.5" fill="#3456b0"/>
<circle cx="161.5" cy="181.1" r="3.1" fill="#1c1c1c"/>
<ellipse cx="127.0" cy="190.2" rx="3.8" ry="6.9" fill="#9aa2b0"/>
<circle cx="127.0" cy="184.2" r="2.7" fill="#1a1a1a"/>
<ellipse cx="133.7" cy="203.0" rx="5.0" ry="6.4" fill="#e0e0e4"/>
<circle cx="133.7" cy="197.0" r="2.4" fill="#222"/>
<ellipse cx="131.1" cy="192.9" rx="3.5" ry="7.5" fill="#2f4fa8"/>
<circle cx="131.1" cy="186.9" r="2.6" fill="#222"/>
<ellipse cx="239.7" cy="196.6" rx="3.3" ry="6.6" fill="#3456b0"/>
<circle cx="239.7" cy="190.6" r="2.9" fill="#2a2a2a"/>
<ellipse cx="243.2" cy="203.3" rx="4.4" ry="5.8" fill="#9aa2b0"/>
<circle cx="243.2" cy="197.3" r="3.1" fill="#2a2a2a"/>
<ellipse cx="216.8" cy="196.7" rx="4.6" ry="6.0" fill="#2f4fa8"/>
<circle cx="216.8" cy="190.7" r="2.7" fill="#222"/>
<ellipse cx="221.2" cy="202.4" rx="4.5" ry="5.7" fill="#2a2a2a"/>
<circle cx="221.2" cy="196.4" r="2.6" fill="#1c1c1c"/>
<rect x="93" y="198" width="30" height="25" fill="#d4d6dc"/><rect x="98" y="201" width="19" height="15" fill="#5a6a90"/><rect x="95" y="222" width="30" height="7" fill="#c8cad0"/>
<ellipse cx="140" cy="222" rx="13" ry="10" fill="#2d56b8"/>
<ellipse cx="167" cy="224" rx="14" ry="9" fill="#e2c6ae"/>
<ellipse cx="192" cy="220" rx="12" ry="12" fill="#6a86c2"/>
<ellipse cx="222" cy="222" rx="15" ry="11" fill="#222"/>
<ellipse cx="240" cy="210" rx="8" ry="14" fill="#333"/>
<circle cx="143" cy="202" r="7" fill="#1a1a1a"/>
<circle cx="166" cy="210" r="8" fill="#1a1a1a"/>
<circle cx="186" cy="198" r="6.5" fill="#1a1a1a"/>
<circle cx="212" cy="206" r="7" fill="#1a1a1a"/>
<circle cx="228" cy="196" r="6" fill="#1a1a1a"/>
<circle cx="125" cy="196" r="5" fill="#1a1a1a"/>
<circle cx="147" cy="207" r="4" fill="#e0b090"/>
<circle cx="170" cy="216" r="5" fill="#e0b090"/>
<circle cx="190" cy="203" r="3.5" fill="#e0b090"/>
<circle cx="221" cy="203" r="4" fill="#e0b090"/>
</g>
<text x="268.3" y="173" font-family="Liberation Sans" font-size="33" fill="#fff" stroke="#fff" stroke-width=".9" textLength="110" lengthAdjust="spacingAndGlyphs">May 16</text>
<text x="261.5" y="201.3" font-family="Liberation Sans" font-size="17.5" fill="#fff" stroke="#fff" stroke-width=".5" textLength="113" lengthAdjust="spacingAndGlyphs">CHINA IMPO</text>
<text x="322.8" y="222.4" font-family="Liberation Sans" font-size="17.5" fill="#fff" stroke="#fff" stroke-width=".5" textLength="48" lengthAdjust="spacingAndGlyphs">FAIR</text>
</svg></div><div class="cbody">
    <div class="ttl">26th China(Guangzhou)<br>International Spring Industry<br>Exhibition</div>
    <div class="date"><svg class="ci" width="17" height="17" viewBox="0 0 17 17"><circle cx="8.5" cy="8.5" r="7" fill="none" stroke="#1f72ea" stroke-width="1.7"/><path d="M8.5 4.3v4.6h3.6" fill="none" stroke="#1f72ea" stroke-width="1.7"/></svg><span style="margin-left:24px;letter-spacing:0.0px">Sat, May 16, 2026, 9:15</span><br><span style="letter-spacing:1.2px">am Asia/Shanghai</span></div>
    <div class="loc"><svg class="pi" width="13" height="17" viewBox="0 0 13 17"><path d="M6.5 15.2C3.6 11.6 1.3 8.8 1.3 6.1a5.2 5.2 0 0 1 10.4 0c0 2.7-2.3 5.5-5.2 9.1z" fill="none" stroke="#5a5a5a" stroke-width="1.5" stroke-linejoin="round"/><circle cx="6.5" cy="6.1" r="1.9" fill="none" stroke="#5a5a5a" stroke-width="1.5"/></svg><span style="margin-left:23px">Guangzhou , China</span></div>
    <div class="row"><div class="btn">Get Ticket</div><div class="free">Free</div></div>
  </div></div>
  <div id="header">
    <svg class="abs" style="left:86px;top:3px" width="94" height="94" viewBox="0 0 94 94">
      <path d="M2.83 38.41 A45 45 0 0 1 47.79 2.01 L51.75 8.29 L47.58 14.01 A33 33 0 0 0 14.61 40.70 L9.70 35.60 Z" fill="#67c1f3"/><path d="M56.36 2.98 A45 45 0 0 1 91.97 45.43 L85.90 49.72 L79.98 45.85 A33 33 0 0 0 53.86 14.72 L59.05 9.91 Z" fill="#f2665f"/><path d="M91.45 54.04 A45 45 0 0 1 46.21 91.99 L42.25 85.71 L46.42 79.99 A33 33 0 0 0 79.59 52.16 L84.67 57.09 Z" fill="#70ab5e"/><path d="M37.64 91.02 A45 45 0 0 1 2.00 47.00 L8.21 42.92 L14.00 47.00 A33 33 0 0 0 40.14 79.28 L34.95 84.09 Z" fill="#f5c94f"/>
      <text x="18" y="42.5" font-family="Liberation Sans" font-weight="bold" font-size="6.4" fill="#111" textLength="58" lengthAdjust="spacingAndGlyphs">INTERNATIONAL</text>
      <text x="21" y="53.6" font-family="Liberation Sans" font-weight="bold" font-size="6.4" fill="#111" textLength="31.7" lengthAdjust="spacingAndGlyphs">EXHIBITI</text>
      <text x="63.8" y="53.6" font-family="Liberation Sans" font-weight="bold" font-size="6.4" fill="#111" textLength="9.2" lengthAdjust="spacingAndGlyphs">NS</text>
      <circle cx="58.2" cy="50.8" r="4.6" fill="none" stroke="#3d2fd0" stroke-width="1.2"/>
      <path d="M53.6 50.8h9.2M58.2 46.2v9.2M54.5 48.5h7.4M54.5 53.1h7.4" stroke="#3d2fd0" stroke-width=".7"/>
      <ellipse cx="58.2" cy="50.8" rx="2.2" ry="4.6" fill="none" stroke="#3d2fd0" stroke-width=".7"/>
    </svg>
    <div class="abs" style="left:255px;top:37px;font-size:18px;line-height:26px;color:#1d72e4;letter-spacing:.05px;-webkit-text-stroke:.35px #1d72e4">Business</div>
    <svg class="abs" style="left:335px;top:46px" width="9" height="6" viewBox="0 0 9 6"><path d="M1 1l3.5 3.5L8 1" stroke="#1d72e4" stroke-width="1.3" fill="none"/></svg>
    <svg class="abs" style="left:377px;top:42px" width="24" height="18" viewBox="0 0 60 45"><rect width="60" height="45" fill="#1f2a6e"/><path d="M0 0L60 45M60 0L0 45" stroke="#fff" stroke-width="9"/><path d="M0 0L60 45M60 0L0 45" stroke="#c8102e" stroke-width="3"/><path d="M30 0v45M0 22.5h60" stroke="#fff" stroke-width="14"/><path d="M30 0v45M0 22.5h60" stroke="#c8102e" stroke-width="8"/></svg>
    <div class="abs" style="left:406px;top:37px;font-size:16.5px;line-height:26px;color:#1d72e4;-webkit-text-stroke:.3px #1d72e4">English</div>
    <svg class="abs" style="left:464px;top:46px" width="9" height="8" viewBox="0 0 9 8"><path d="M0 0h9L4.5 7.5z" fill="#555"/></svg>
    <div class="abs" style="left:492px;top:31px;width:159px;height:37px;border-radius:3px;background:#0b7cf6"></div>
    <div class="abs" style="left:505px;top:37px;font-size:17px;line-height:26px;color:#fff;letter-spacing:.35px;-webkit-text-stroke:.3px #fff">Choose Location</div>
    <div class="abs" style="left:1058px;top:30px;width:245px;height:40px;border:1px solid #c6c6c6;border-right:none;border-radius:20px 0 0 20px;background:#fff"></div>
    <div class="abs" style="left:1067px;top:38px;font-size:16px;line-height:26px;color:#7b7b7b;letter-spacing:.2px">Search Events...</div>
    <div class="abs" style="left:1298px;top:31px;width:40px;height:39px;border-radius:0 20px 20px 0;background:#1a73e8"></div>
    <svg class="abs" style="left:1309px;top:43px" width="18" height="16" viewBox="0 0 18 16"><circle cx="7" cy="6.5" r="4.6" stroke="#fff" stroke-width="2.4" fill="none"/><path d="M10.5 10l4.5 4.5" stroke="#fff" stroke-width="2.8" stroke-linecap="round"/></svg>
    <svg class="abs" style="left:1543px;top:26px" width="24" height="30" viewBox="0 0 24 30">
      <path d="M2 7h3v8h12V7h4v8l-3 4H6l-4-4z" fill="#c4161c"/>
      <rect x="7" y="2" width="3" height="10" fill="#8e0f12"/><rect x="11.5" y="1" width="3" height="11" fill="#b81419"/>
      <rect x="17" y="10" width="5" height="8" fill="#ee6a23"/>
      <text x="12" y="27" text-anchor="middle" font-family="Liberation Sans" font-weight="bold" font-size="7" fill="#d8552a">WEHE</text>
    </svg>
    <div class="abs" style="left:1540px;top:53px;font-size:15px;line-height:24px;color:#2a2f45;letter-spacing:.45px">My account</div>
    <div class="abs" style="left:1643px;top:33px;width:145px;height:34px;border-radius:4px;background:#1a73e8"></div>
    <div class="abs" style="left:1660px;top:37px;font-weight:bold;font-size:15px;line-height:26px;color:#fff">+ Create Event</div>
  </div>
</div>
<!-- scrollbar -->
<div id="scrollbar">
<svg class="abs" style="left:0;top:0" width="15" height="953" viewBox="0 0 15 953"><path d="M3 11h9L7.5 6z" fill="#a3a3a3"/><rect x="3" y="162.5" width="9" height="36.5" rx="4.5" fill="#a6a5a3"/><path d="M3 941h9l-4.5 5z" fill="#a3a3a3"/></svg>
</div>
<!-- social sidebar -->
<div class="abs" style="left:0;top:566px;width:32px;height:32px;background:#3b5998"><svg width="32" height="32" viewBox="0 0 32 32"><path d="M17.3 25v-8h2.6l.4-3.1h-3v-2c0-.9.3-1.5 1.5-1.5h1.6V7.6c-.3 0-1.2-.1-2.3-.1-2.3 0-3.9 1.4-3.9 4v2.3h-2.6V17h2.6v8z" fill="#fff"/></svg></div>
<div class="abs" style="left:0;top:600px;width:32px;height:32px;background:#000"><svg width="32" height="32" viewBox="0 0 32 32"><path d="M10.5 10.5h3l8 11h-3z" fill="none" stroke="#fff" stroke-width="1.2"/><path d="M11.5 11.5l9 9" stroke="#fff" stroke-width=".7"/><path d="M21 10.5l-4 4.5M15 17l-4.5 4.5" stroke="#fff" stroke-width="1"/></svg></div>
<div class="abs" style="left:0;top:634px;width:32px;height:32px;background:#0077b5"><svg width="32" height="32" viewBox="0 0 32 32"><rect x="9" y="13" width="3" height="10" fill="#fff"/><circle cx="10.5" cy="9.8" r="1.8" fill="#fff"/><path d="M14.5 13h2.9v1.4c.5-.9 1.6-1.6 3.1-1.6 2.7 0 3.3 1.7 3.3 4V23h-3v-5.4c0-1.2-.2-2.2-1.5-2.2s-1.8.9-1.8 2.2V23h-3z" fill="#fff"/></svg></div>
<div class="abs" style="left:0;top:668px;width:32px;height:32px;background:linear-gradient(45deg,#f09433 0%,#e6683c 25%,#dc2743 50%,#cc2366 75%,#bc1888 100%)"><svg width="32" height="32" viewBox="0 0 32 32"><rect x="9.5" y="9.5" width="13" height="13" rx="3.8" fill="none" stroke="#fff" stroke-width="1.6"/><circle cx="16" cy="16" r="3.1" fill="none" stroke="#fff" stroke-width="1.6"/><circle cx="19.8" cy="12.2" r=".9" fill="#fff"/></svg></div>
<div class="abs" style="left:0;top:702px;width:32px;height:32px;background:#cb2027"><svg width="32" height="32" viewBox="0 0 32 32"><circle cx="16" cy="16" r="7.2" fill="#fff"/><path d="M15.4 19.2c-.4 2-1 3.3-1.9 4.3l1 .5c.8-1.2 1.3-2.6 1.6-3.8.5.6 1.3.9 2 .9 2.2 0 3.6-2 3.6-4.4 0-2.6-2.1-4.3-4.8-4.3-3 0-4.6 2-4.6 4 0 1.3.6 2.3 1.5 2.6.2 0 .3 0 .4-.3l.2-.7c0-.2 0-.3-.2-.5-.3-.4-.5-.9-.5-1.5 0-1.7 1.3-3.1 3.2-3.1 1.8 0 2.9 1.1 2.9 2.7 0 1.8-.8 3.2-2 3.2-.7 0-1.1-.5-1-1.2.2-.8.6-1.6.6-2.2 0-.5-.3-.9-.8-.9-.7 0-1.2.7-1.2 1.6 0 .6.2 1 .2 1z" fill="#cb2027"/></svg></div>
<!-- whatsapp -->
<div class="abs" style="left:1855px;top:1000px;width:30px;height:20px;border-radius:0 0 8px 4px;background:#1a66d8"></div>
<div class="abs" style="left:1628px;top:976px;width:257px;height:40px;border-radius:20px;background:#25d366;box-shadow:0 4px 14px rgba(0,0,0,.18)"></div>
<svg class="abs" style="left:1651px;top:986px" width="20" height="20" viewBox="0 0 20 20"><path d="M3.2 15.2A8 8 0 1 1 6 17.6L1.6 18.6z" fill="none" stroke="#fff" stroke-width="1.8" stroke-linejoin="round"/><path d="M7 6c.4-.5 1-.5 1.3 0l.7 1.5-.6 1c.6 1.2 1.6 2.2 2.8 2.8l1-.6 1.5.7c.5.3.5.9 0 1.3-1.3 1.1-3.2.4-4.9-1.3S6 7.3 7 6z" fill="#fff"/></svg>
<div class="abs" style="left:1682px;top:985px;font-size:17px;line-height:22px;color:#fff;letter-spacing:1.25px;-webkit-text-stroke:.25px #fff">How can I help you?</div>
<svg class="abs" style="left:1628px;top:944px" width="200" height="48" viewBox="0 0 200 48"><g fill="none" stroke="rgba(95,95,95,.5)" stroke-linecap="round"><g transform="translate(3.5,3.5) scale(0.947)"><path d="M2 3l2 2M1 8l2 2M1.5 17l2.5-5M6 3h5v6H6zM6 6h5M5 11.5h7M8 11.5c0 3-1 5-2.5 6.5M8 13.5h3c0 2-.5 4-1.5 4.5M14 1l-1.2 5M13 5h5.5M17.5 5c-.5 5-2 9-4.5 12.5M14 9.5c1 3 2.5 6 4.5 8.5" stroke-width="1.16"/></g><g transform="translate(23,3.5) scale(0.947)"><path d="M2 3l2 2M1 8l2 2M1.5 17l2.5-5M7 3.5c3.5 0 7-.5 10-1.5M6 8.5h12M12 2.5v8M8 11.5h8v6.5H8zM8 14.5h8" stroke-width="1.16"/></g><g transform="translate(3.5,31) scale(0.962)"><path d="M1 3h5M3.2 1L2 8h4.5M4 5v8M1 10.5h5.5M7 3h5M9.5 1L8.5 7M7 6h5.5M8.5 9h3.5L9 12.5M10 11l2 2" stroke-width="0.99"/></g><g transform="translate(17.7,31) scale(0.962)"><path d="M1 2h6M4 2L2 6h5M1 9h6M4 6v6M1 12.5h6M9 3v6M12 1v12l-2-1" stroke-width="0.99"/></g><path d="M32.9 31.5l-.8 2M34.9 31.5l-.8 2" stroke-width="1"/><g transform="translate(36.9,31) scale(0.962)"><path d="M1 2l1.5 1.5M1 6h2v6l2-2M6 2v3l1 1M8 1h3v4l1.5 1M6 8h5l-4 5M7.5 9.5l5 3.5" stroke-width="0.99"/></g><g transform="translate(51.099999999999994,31) scale(0.962)"><path d="M1 1h11v3H1zM5 1v3M8 1v3M3 5.5h8M7 5v2M4 7h6v5H4zM4 9.5h6M1 13h11M2 7v6" stroke-width="0.99"/></g><path d="M66.3 31.5l-.8 2M68.3 31.5l-.8 2" stroke-width="1"/><g transform="translate(70.3,31) scale(0.962)"><path d="M2 2v9l4-2M5 4l1.2 2M10 1L9 8l-4 5M9 9l3 4" stroke-width="0.99"/></g><g transform="translate(84.5,31) scale(0.658)"><path d="M2 3l2 2M1 8l2 2M1.5 17l2.5-5M6 3h5v6H6zM6 6h5M5 11.5h7M8 11.5c0 3-1 5-2.5 6.5M8 13.5h3c0 2-.5 4-1.5 4.5M14 1l-1.2 5M13 5h5.5M17.5 5c-.5 5-2 9-4.5 12.5M14 9.5c1 3 2.5 6 4.5 8.5" stroke-width="1.44"/></g><g transform="translate(98.7,31) scale(0.658)"><path d="M2 3l2 2M1 8l2 2M1.5 17l2.5-5M7 3.5c3.5 0 7-.5 10-1.5M6 8.5h12M12 2.5v8M8 11.5h8v6.5H8zM8 14.5h8" stroke-width="1.44"/></g></g><text x="48" y="19" font-family="Liberation Sans" font-size="18" fill="rgba(95,95,95,.5)" textLength="88" lengthAdjust="spacingAndGlyphs">Windows</text><text x="126" y="41.4" font-family="Liberation Sans" font-size="13.5" fill="rgba(95,95,95,.5)" textLength="60" lengthAdjust="spacingAndGlyphs">Windows</text><circle cx="190.5" cy="40" r="1.6" fill="none" stroke="rgba(95,95,95,.5)" stroke-width=".9"/></svg>
<!-- watermark -->
<svg class="abs" style="left:1270px;top:925px;opacity:.66" width="600" height="75" viewBox="0 0 600 75">
 <g fill="#858585">
  <ellipse cx="32" cy="29" rx="26" ry="22.5"/><path d="M16 43l-5 10 14-6z"/>
 </g>
 <circle cx="24" cy="22" r="2.6" fill="#fff"/><circle cx="40" cy="22" r="2.6" fill="#fff"/>
 <ellipse cx="57" cy="46" rx="25" ry="21.5" fill="#fff"/>
 <g fill="#8a8a8a"><ellipse cx="57" cy="46" rx="22" ry="18.6"/><path d="M70 60l10 8-15-4z"/></g>
 <circle cx="50" cy="40" r="2.3" fill="#fff"/><circle cx="64" cy="40" r="2.3" fill="#fff"/>
 <g fill="none" stroke="#858585" stroke-width="4.3" stroke-linecap="butt" stroke-linejoin="miter" transform="translate(95,11)">
  <!-- 公 -->
  <path d="M17 3L3 26M34 3c4 9 10 16 19 22M25 22L8 48l38-3M35 33l13 17"/>
  <!-- 众 -->
  <g transform="translate(57,0)"><path d="M25 2C22 13 14 21 3 26M25 8c5 8 13 14 23 17M15 25C13 36 8 44 2 50M15 33l8 14M38 25c-2 11-6 19-11 25M38 31c3 8 7 13 13 18"/></g>
  <!-- 号 -->
  <g transform="translate(112,0)"><path d="M11 3h30v16H11zM2 27h50M14 27l-3 12h33c0 5-1 9-3 11h-9"/></g>
  <!-- dot -->
  <circle cx="190" cy="26" r="3.6" fill="#858585" stroke="none"/>
  <!-- 广 -->
  <g transform="translate(223,0)"><path d="M25 1l4 7M8 11h45M11 11v18c0 8-3 15-8 21"/></g>
  <!-- 州 -->
  <g transform="translate(281,0)"><path d="M7 20L3 32M15 2v34c0 5-4 11-9 15M22 18l4 9M32 2v48M39 18l4 9M50 2v49"/></g>
  <!-- 电 -->
  <g transform="translate(334,0)"><path d="M6 11h38v24H6zM6 23h38M25 1v42c0 4 2 5 6 5h15c3 0 4-2 4-7"/></g>
  <!-- 热 -->
  <g transform="translate(388,0)"><path d="M2 12h16M10 2v30c0 3-2 4-5 3M2 30l16-8M20 12h19l2 21c0 3 2 4 5 4h3M29 3c0 16-3 26-10 33M32 21l6 6M6 41L3 50M17 42l3 8M29 42l3 8M41 42l7 8"/></g>
  <!-- 展 -->
  <g transform="translate(443,0)"><path d="M9 4h37v12H9zM9 16v18c0 6-3 12-7 17M15 25h33M15 34h33M25 18v16M37 18v16M19 34v15l10-3M30 36c6 8 12 12 19 14M43 37l-6 5"/></g>
 </g>
</svg>
</body></html>
